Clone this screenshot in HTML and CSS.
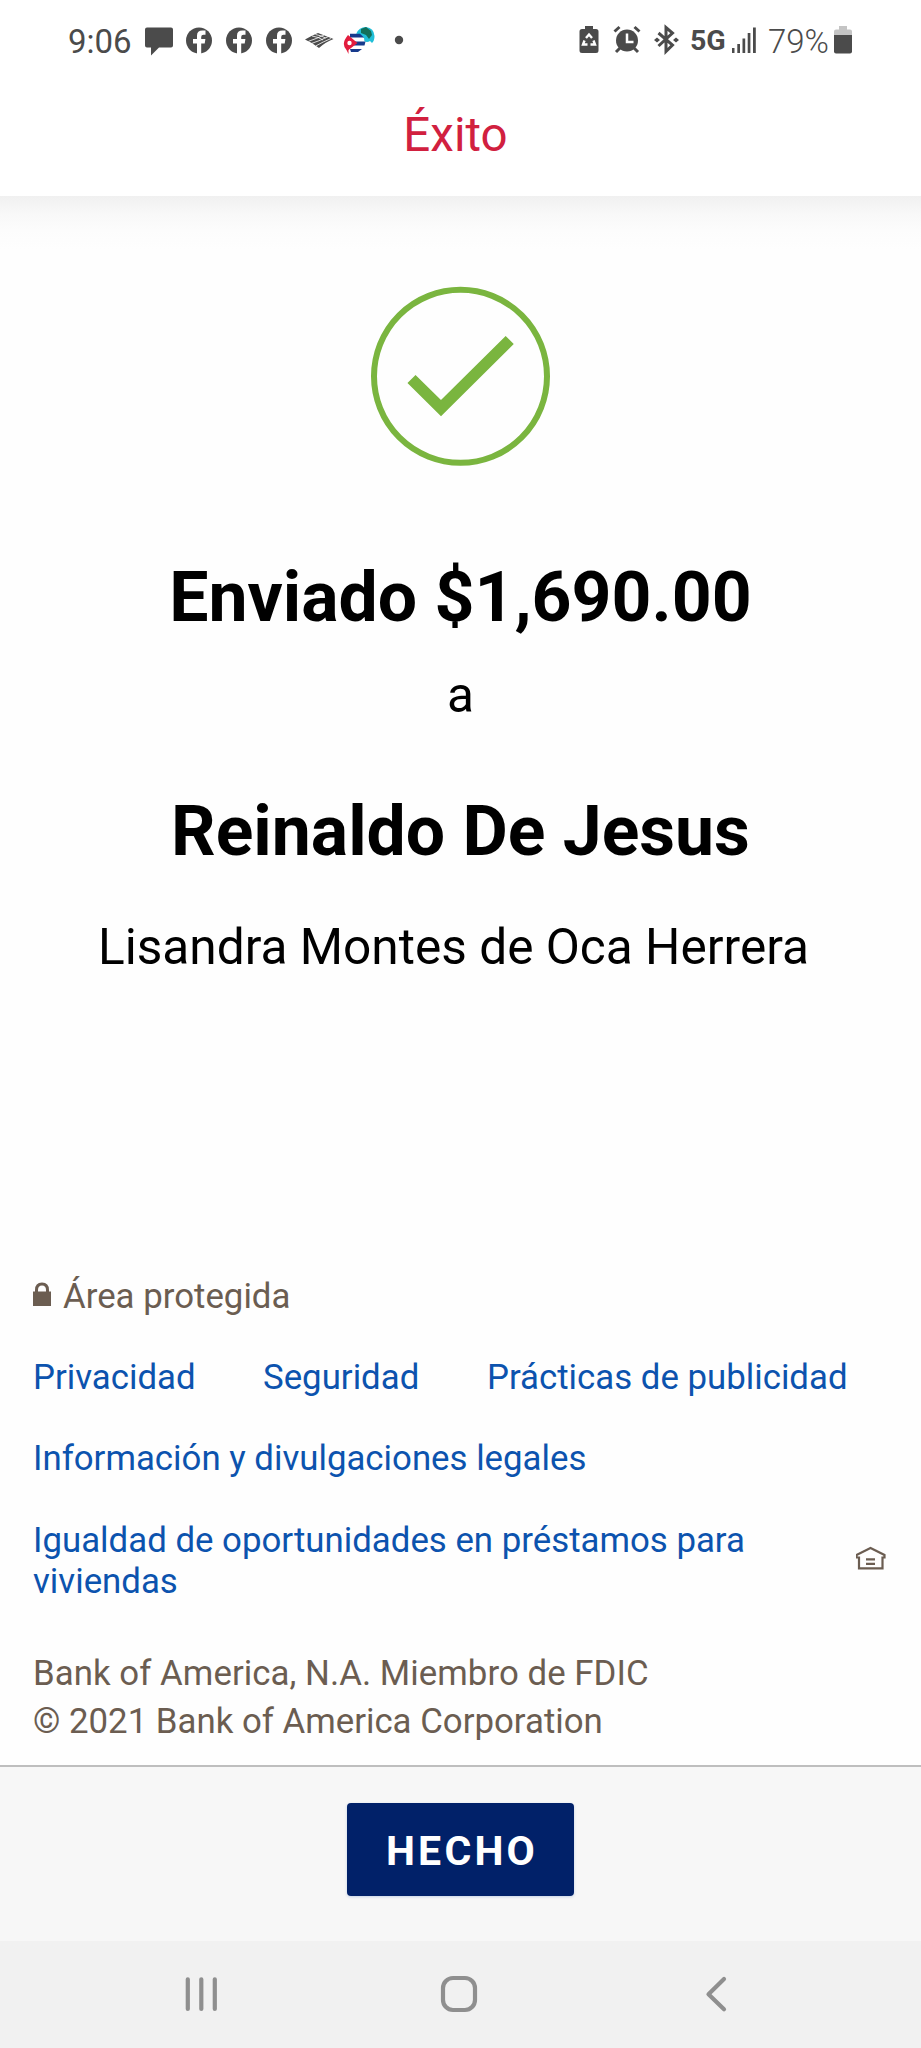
FILE: index.html
```html
<!DOCTYPE html>
<html lang="es">
<head>
<meta charset="utf-8">
<title>Éxito</title>
<link rel="stylesheet" href="styles.css">
</head>
<body>
<div class="screen">
  <header class="header">
    <div class="status">
      <div class="status-left">
        <span class="time">9:06</span>
        <svg class="ico chat" width="30" height="40" viewBox="144 20 30 40"><path d="M147 27.500h24q2 0 2 2v16q0 2-2 2h-12l-8 8v-8h-4q-2 0-2-2v-16q0-2 2-2z"/></svg>
        <svg class="ico fb" width="28" height="40" viewBox="0 20 28 40"><circle cx="14" cy="40.500" r="13"/><path class="cut" d="M12 54v-10.500h-4v-4.500h4v-3.500q0-5 5.500-5h3v4.200h-2q-2.300 0-2.300 2.300v2h4.200l-.7 4.500h-3.500V54z"/></svg>
        <svg class="ico fb" width="28" height="40" viewBox="0 20 28 40"><circle cx="14" cy="40.500" r="13"/><path class="cut" d="M12 54v-10.500h-4v-4.500h4v-3.500q0-5 5.500-5h3v4.200h-2q-2.300 0-2.300 2.300v2h4.200l-.7 4.500h-3.500V54z"/></svg>
        <svg class="ico fb" width="28" height="40" viewBox="0 20 28 40"><circle cx="14" cy="40.500" r="13"/><path class="cut" d="M12 54v-10.500h-4v-4.500h4v-3.500q0-5 5.500-5h3v4.200h-2q-2.300 0-2.300 2.300v2h4.200l-.7 4.500h-3.500V54z"/></svg>
        <svg class="ico bank" width="30" height="40" viewBox="304 20 30 40"><path d="M305 39.500q7-4 13-6.500l15.500 6q-8 3-14.500 9-6-5-14-8.500z"/><path class="gap" d="M308.500 41.300q9-3 15.500-6.300M312 43.300q9-3 16-6.600M316 45.800q7-4 15-7.300M312 36q7 1 11 4M315.500 34.500q6 1 10 3.500"/></svg>
        <svg class="ico globe" width="34" height="40" viewBox="342 20 34 40"><path d="M356 34q3-7 10-7 8 1 8.500 9 0 5-2.500 7l-2-2q-3 2-6 0z" fill="#20bfd8"/><path d="M361 29l5-2 5 4 1 4-3 4-3-4-5-2z" fill="#126f5a"/><path d="M347 35q5-3 11-1l6 4q2 8-4 12l-7 3h-4l-1-2q-5-4-4-9z" fill="#fff"/><path d="M350 33.800h10l4 3.700h-14zM354 41.500h11.500l-1 4h-10.500zM350 49h12l-4 3h-7z" fill="#173a8c"/><path d="M348 35l9.500 8-9 7v4l-2-4q-6-6 1.500-15z" fill="#e21c3d"/><circle cx="349.500" cy="43" r="2.200" fill="#fff"/></svg>
        <svg class="ico dot" width="10" height="40" viewBox="394 20 10 40"><circle cx="399" cy="40" r="4.200"/></svg>
      </div>
      <div class="status-right">
        <svg class="ico saver" width="20" height="40" viewBox="580 20 20 40"><path d="M586 26h8v3h3q2.500 0 2.500 2.500v19q0 2.500-2.500 2.500h-14q-2.500 0-2.500-2.500v-19q0-2.500 2.500-2.500h3z"/><path class="recycle" d="M587 38l3-3.500 3 3.500M594.500 40.500l1.500 4h-4.500M588.500 44.500h-4.500l1.500-4"/></svg>
        <svg class="ico alarm" width="28" height="40" viewBox="614 20 28 40"><circle cx="628" cy="40.500" r="11"/><path class="bar" d="M615.500 31.500l5-4.500M635.500 27l5 4.500M621 48l-4 4M635 48l4 4"/><path class="hand" d="M628 33.500v8.500h6.500"/></svg>
        <svg class="ico bt" width="26" height="40" viewBox="655 20 26 40"><path class="bar" d="M659.500 33l14 12-6.500 6.500v-24l6.500 5.500-14 13"/><path d="M655 40l3-2.500 3 2.500-3 2.500zM674 40l3-2.500 3 2.500-3 2.500z"/></svg>
        <span class="net">5G</span>
        <svg class="ico signal" width="25" height="40" viewBox="733 20 25 40"><path d="M733 48h2.500v5H733zM738.300 44h2.700v9h-2.700zM743.500 38.500h2.700V53h-2.700zM748.700 33h2.700v20h-2.700zM754 27.500h2.800V53H754z"/></svg>
        <span class="pct">79%</span>
        <svg class="ico batt" width="20" height="40" viewBox="834 20 20 40"><path class="pale" d="M840 26h8v3.500h3q2 0 2 2V36h-18v-4.500q0-2 2-2h3z"/><path d="M835 35h18v16.500q0 2-2 2h-14q-2 0-2-2z"/></svg>
      </div>
    </div>
    <h1 class="title">Éxito</h1>
  </header>
  <main class="main">
    <svg class="success" width="181" height="181" viewBox="370 286 181 181"><circle cx="460.500" cy="376.300" r="86.500"/><path d="M411.500 379l29.500 29.200 68.700-68.200"/></svg>
    <h2 class="amount">Enviado $1,690.00</h2>
    <p class="to">a</p>
    <h2 class="recipient">Reinaldo De Jesus</h2>
    <p class="sender">Lisandra Montes de Oca Herrera</p>
  </main>
  <footer class="footer">
    <div class="secure">
      <svg width="19" height="26" viewBox="33 1282 19 26"><path fill="#6b5d51" d="M33 1291.500h18v14.500H33z"/><path fill="none" stroke="#6b5d51" stroke-width="3" d="M36.500 1293v-3q0-6 5.500-6t5.500 6v3"/></svg>
      <span class="area">Área protegida</span>
    </div>
    <nav class="links">
      <a class="l-priv">Privacidad</a><a class="l-seg">Seguridad</a><a class="l-prac">Prácticas de publicidad</a>
    </nav>
    <a class="legal">Información y divulgaciones legales</a>
    <div class="housing">
      <a class="housing-link">Igualdad de oportunidades en préstamos para<br>viviendas</a>
      <svg width="30" height="24" viewBox="857 1546 30 24"><path fill="none" stroke="#6b5d51" stroke-width="2.200" d="M860 1557.500v10.800h23.500v-10.800h2v-2.500l-14-7-14 7v2.500zM867 1559.300h9M867 1563.800h9"/></svg>
    </div>
    <p class="corp">Bank of America, N.A. Miembro de FDIC</p>
    <p class="copy">© 2021 Bank of America Corporation</p>
  </footer>
  <div class="action"><button class="done">HECHO</button></div>
  <div class="navbar">
    <svg width="36" height="40" viewBox="184 1974 36 40"><path d="M187.800 1979.300v29.600M201.300 1979.300v29.600M214.800 1979.300v29.600"/></svg>
    <svg width="40" height="40" viewBox="439 1974 40 40"><rect x="443" y="1978" width="32" height="32" rx="10"/></svg>
    <svg width="26" height="38" viewBox="704 1975 26 38"><path d="M725 1979l-15.500 15.200 15.500 15.100"/></svg>
  </div>
</div>
</body>
</html>
```
FILE: styles.css
```css
* { box-sizing: border-box; margin: 0; padding: 0; }
body { background: #fff; font-family: Roboto, "Liberation Sans", sans-serif; }
.screen { width: 921px; height: 2048px; display: flex; flex-direction: column; overflow: hidden; background: #fefefe; }
.header { height: 196px; flex: none; background: #fff; }
.status { height: 82px; padding: 20px 68px 0 68px; display: flex; justify-content: space-between; color: #4b4b4b; }
.status-left, .status-right { display: flex; height: 40px; line-height: 40px; white-space: nowrap; }
.ico { fill: #4b4b4b; flex: none; }
.time { width: 76px; font-size: 33px; padding-top: 2px; }
.chat { margin-right: 11px; }
.fb { margin-right: 12px; }
.fb .cut { fill: #fff; }
.bank { margin-left: -1px; }
.bank .gap { stroke: #fff; stroke-width: .8; fill: none; }
.globe { margin-left: 8px; }
.dot { margin-left: 18px; }
.recycle { fill: none; stroke: #fff; stroke-width: 2.4; }
.alarm { margin-left: 14px; }
.bar { fill: none; stroke: #4b4b4b; stroke-width: 3; }
.hand { fill: none; stroke: #fff; stroke-width: 2.5; }
.bt { margin-left: 13px; }
.net { margin-left: 10px; width: 42px; font-size: 28.5px; font-weight: 700; padding-top: 1px; }
.pct { margin-left: 11px; width: 65px; font-size: 33px; font-weight: 300; padding-top: 2px; }
.pale { fill: #c4c4c4; }
.title { height: 106px; line-height: 106px; padding-right: 10px; text-align: center; font-size: 47.5px; font-weight: 400; color: #d1203f; }
.main { height: 1060px; flex: none; padding-top: 90px; display: flex; flex-direction: column; align-items: center; color: #000; white-space: nowrap;
  background: linear-gradient(#f0f0f0 0, #f8f8f8 17px, #fcfcfc 34px, #fefefe 54px); }
.success { flex: none; }
.success circle { fill: none; stroke: #7ab53f; stroke-width: 6; }
.success path { fill: none; stroke: #7ab53f; stroke-width: 11.5; }
.amount { margin-top: 90px; height: 80px; line-height: 80px; font-size: 69.7px; }
.to { margin-top: 28px; height: 60px; line-height: 60px; font-size: 49.6px; }
.recipient { margin-top: 66px; height: 80px; line-height: 80px; font-size: 69.7px; }
.sender { margin: 46px 14px 0 0; height: 60px; line-height: 60px; font-size: 49.6px; }
.footer { height: 509px; flex: none; padding-left: 33px; font-size: 34.8px; line-height: 41px; color: #6b5d51; white-space: nowrap; }
.footer a { color: #0c53ae; }
.secure { margin-top: 20px; height: 41px; display: flex; align-items: center; gap: 11px; }
.secure svg { margin-bottom: 3px; }
.links { margin-top: 40px; display: flex; height: 41px; }
.l-priv { width: 230px; }
.l-seg { width: 224px; }
.legal { display: block; margin-top: 40px; height: 41px; }
.housing { margin-top: 41px; display: flex; justify-content: space-between; align-items: center; padding-right: 35px; }
.housing svg { margin-bottom: 6px; }
.corp { margin-top: 47px; height: 48px; line-height: 48px; letter-spacing: .05px; }
.copy { height: 48px; line-height: 48px; }
.action { height: 176px; flex: none; border-top: 2px solid #bebebe; background: #f7f7f7; padding-top: 36px; text-align: center; }
.done { width: 227px; height: 93px; border: 0; border-radius: 4px; background: #012169; color: #fff; font: 700 41px/93px Roboto, sans-serif; letter-spacing: 3.2px; padding: 2px 0 0 3px; box-shadow: 0 1px 3px #c4d2e6; }
.navbar { flex: 1; background: #f1f1f1; display: flex; justify-content: space-between; align-items: center; padding: 0 192px 1px 184px; }
.navbar svg { fill: none; stroke: #8f8f8f; stroke-width: 4.2; stroke-linecap: round; stroke-linejoin: round; }
.navbar svg:nth-child(2) { margin-right: 5px; }
```
